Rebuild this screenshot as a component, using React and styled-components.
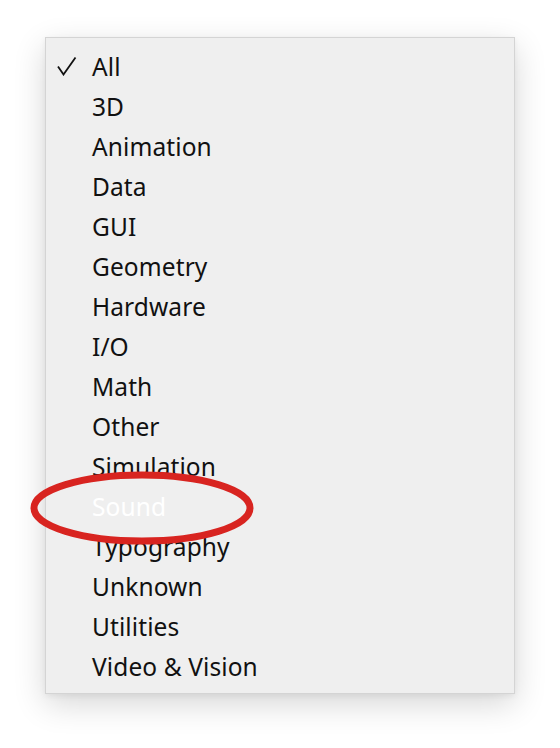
import React from "react";
import styled, { createGlobalStyle } from "styled-components";

const Global = createGlobalStyle`
  html, body { margin: 0; padding: 0; background: #ffffff; }
  body { font-family: "Noto Sans", "Open Sans", sans-serif; }
`;

const Page = styled.div`
  width: 560px;
  height: 748px;
  padding: 37px 0 0 45px;
  box-sizing: border-box;
`;

const Menu = styled.ul`
  position: relative;
  list-style: none;
  margin: 0;
  width: 470px;
  height: 657px;
  box-sizing: border-box;
  padding: 8px 0 0 0;
  background: #efefef;
  border: 1px solid #d4d4d4;
  box-shadow: 0 10px 30px rgba(0, 0, 0, 0.16), 0 2px 6px rgba(0, 0, 0, 0.06);
`;

const Item = styled.li`
  display: flex;
  align-items: center;
  height: 40px;
  font-size: 24.5px;
  letter-spacing: 0.1px;
  color: ${(p) => (p.$light ? "#ffffff" : "#111111")};
`;

const Check = styled.span`
  display: flex;
  align-items: center;
  width: 46px;
  padding-left: 11px;
  box-sizing: border-box;
`;

const Ring = styled.svg`
  position: absolute;
  left: -16px;
  top: 428px;
  overflow: visible;
`;

const items = [
  "All", "3D", "Animation", "Data", "GUI", "Geometry", "Hardware", "I/O",
  "Math", "Other", "Simulation", "Sound", "Typography", "Unknown", "Utilities",
  "Video & Vision",
];

const CheckIcon = () => (
  <svg width="20" height="20" viewBox="0 0 20 20">
    <path d="M1 10.5 L6.5 18.5 L18.5 1.5" fill="none" stroke="#111" strokeWidth="1.8" strokeLinejoin="miter" />
  </svg>
);

export default function App() {
  return (
    <Page>
      <Global />
      <Menu>
        {items.map((t) => (
          <Item key={t} $light={t === "Sound"}>
            <Check>{t === "All" ? <CheckIcon /> : null}</Check>
            {t}
          </Item>
        ))}
        <Ring width="230" height="80">
          <ellipse cx="112" cy="42" rx="108" ry="33" fill="none" stroke="#d82420" strokeWidth="7" />
        </Ring>
      </Menu>
    </Page>
  );
}
